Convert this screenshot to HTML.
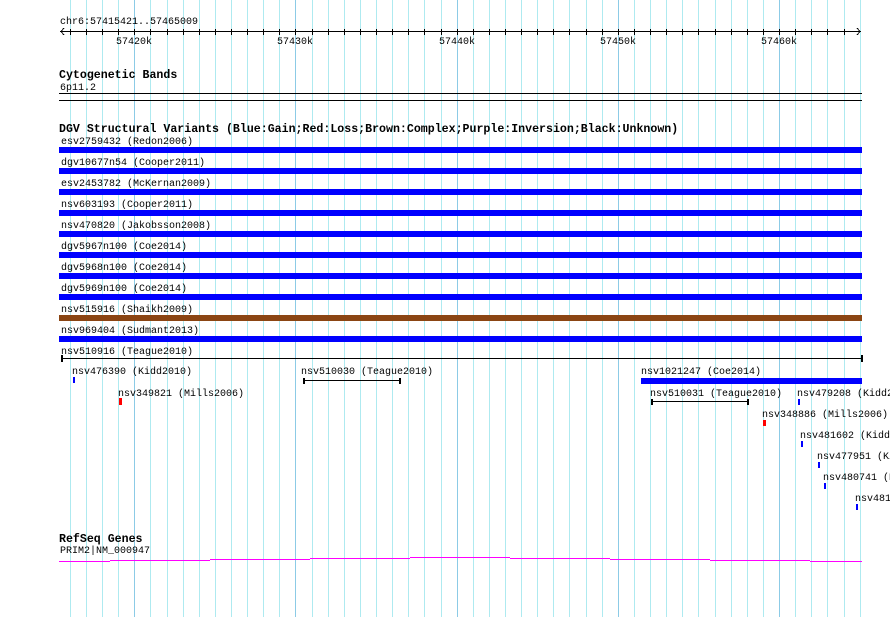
<!DOCTYPE html>
<html><head><meta charset="utf-8"><style>
html,body{margin:0;padding:0;background:#fff;}
svg{display:block;}
text{font-family:"Liberation Mono",monospace;font-size:10px;fill:#000;}
.b{font-weight:bold;font-size:11.6px;}
</style></head><body>
<svg width="890" height="617" viewBox="0 0 890 617" xmlns="http://www.w3.org/2000/svg">
<g shape-rendering="crispEdges">
<path stroke="#aeeaf0" stroke-width="1" fill="none" d="M70.5 0V617M86.5 0V617M102.5 0V617M118.5 0V617M150.5 0V617M167.5 0V617M183.5 0V617M199.5 0V617M215.5 0V617M231.5 0V617M247.5 0V617M263.5 0V617M279.5 0V617M312.5 0V617M328.5 0V617M344.5 0V617M360.5 0V617M376.5 0V617M392.5 0V617M408.5 0V617M424.5 0V617M441.5 0V617M473.5 0V617M489.5 0V617M505.5 0V617M521.5 0V617M537.5 0V617M553.5 0V617M569.5 0V617M586.5 0V617M602.5 0V617M634.5 0V617M650.5 0V617M666.5 0V617M682.5 0V617M698.5 0V617M715.5 0V617M731.5 0V617M747.5 0V617M763.5 0V617M795.5 0V617M811.5 0V617M827.5 0V617M844.5 0V617M860.5 0V617"/>
<path stroke="#8ccbe6" stroke-width="1" fill="none" d="M134.5 0V617M295.5 0V617M457.5 0V617M618.5 0V617M779.5 0V617"/>

<!-- ruler -->
<text x="60" y="24">chr6:57415421..57465009</text>
<line x1="60" y1="31.5" x2="861" y2="31.5" stroke="#000"/>
<polyline points="64,28 61,31.5 64,35" fill="none" stroke="#000"/>
<polyline points="857,28 860,31.5 857,35" fill="none" stroke="#000"/>
<path stroke="#000" stroke-width="1" fill="none" d="M70.5 29V35M86.5 29V35M102.5 29V35M118.5 29V35M134.5 29V35M150.5 29V35M167.5 29V35M183.5 29V35M199.5 29V35M215.5 29V35M231.5 29V35M247.5 29V35M263.5 29V35M279.5 29V35M295.5 29V35M312.5 29V35M328.5 29V35M344.5 29V35M360.5 29V35M376.5 29V35M392.5 29V35M408.5 29V35M424.5 29V35M441.5 29V35M457.5 29V35M473.5 29V35M489.5 29V35M505.5 29V35M521.5 29V35M537.5 29V35M553.5 29V35M569.5 29V35M586.5 29V35M602.5 29V35M618.5 29V35M634.5 29V35M650.5 29V35M666.5 29V35M682.5 29V35M698.5 29V35M715.5 29V35M731.5 29V35M747.5 29V35M763.5 29V35M779.5 29V35M795.5 29V35M811.5 29V35M827.5 29V35M844.5 29V35"/>
<text x="134" y="44" text-anchor="middle">57420k</text>
<text x="295" y="44" text-anchor="middle">57430k</text>
<text x="457" y="44" text-anchor="middle">57440k</text>
<text x="618" y="44" text-anchor="middle">57450k</text>
<text x="779" y="44" text-anchor="middle">57460k</text>

<text class="b" x="59" y="78">Cytogenetic Bands</text>
<text x="60" y="90">6p11.2</text>
<rect x="59" y="93" width="803" height="1" fill="#000"/>
<rect x="59" y="100" width="803" height="1" fill="#000"/>

<text class="b" x="59" y="132">DGV Structural Variants (Blue:Gain;Red:Loss;Brown:Complex;Purple:Inversion;Black:Unknown)</text>
<text x="61" y="144">esv2759432 (Redon2006)</text>
<rect x="59" y="147" width="803" height="6" fill="#0000ff"/>
<text x="61" y="165">dgv10677n54 (Cooper2011)</text>
<rect x="59" y="168" width="803" height="6" fill="#0000ff"/>
<text x="61" y="186">esv2453782 (McKernan2009)</text>
<rect x="59" y="189" width="803" height="6" fill="#0000ff"/>
<text x="61" y="207">nsv603193 (Cooper2011)</text>
<rect x="59" y="210" width="803" height="6" fill="#0000ff"/>
<text x="61" y="228">nsv470820 (Jakobsson2008)</text>
<rect x="59" y="231" width="803" height="6" fill="#0000ff"/>
<text x="61" y="249">dgv5967n100 (Coe2014)</text>
<rect x="59" y="252" width="803" height="6" fill="#0000ff"/>
<text x="61" y="270">dgv5968n100 (Coe2014)</text>
<rect x="59" y="273" width="803" height="6" fill="#0000ff"/>
<text x="61" y="291">dgv5969n100 (Coe2014)</text>
<rect x="59" y="294" width="803" height="6" fill="#0000ff"/>
<text x="61" y="312">nsv515916 (Shaikh2009)</text>
<rect x="59" y="315" width="803" height="6" fill="#8b4513"/>
<text x="61" y="333">nsv969404 (Sudmant2013)</text>
<rect x="59" y="336" width="803" height="6" fill="#0000ff"/>
<text x="61" y="354">nsv510916 (Teague2010)</text>
<rect x="61" y="358" width="801" height="1" fill="#000"/>
<rect x="61" y="355" width="2" height="7" fill="#000"/>
<rect x="861" y="355" width="2" height="7" fill="#000"/>

<text x="72" y="374">nsv476390 (Kidd2010)</text>
<rect x="73" y="377" width="2" height="6" fill="#0000ff"/>
<text x="301" y="374">nsv510030 (Teague2010)</text>
<rect x="303" y="380" width="97" height="1" fill="#000"/>
<rect x="303" y="378" width="2" height="6" fill="#000"/>
<rect x="399" y="378" width="2" height="6" fill="#000"/>
<text x="641" y="374">nsv1021247 (Coe2014)</text>
<rect x="641" y="378" width="221" height="6" fill="#0000ff"/>

<text x="118" y="396">nsv349821 (Mills2006)</text>
<rect x="119" y="398" width="3" height="7" fill="#ff0000"/>
<text x="650" y="396">nsv510031 (Teague2010)</text>
<rect x="651" y="401" width="97" height="1" fill="#000"/>
<rect x="651" y="399" width="2" height="6" fill="#000"/>
<rect x="747" y="399" width="2" height="6" fill="#000"/>
<text x="797" y="396">nsv479208 (Kidd2010)</text>
<rect x="798" y="399" width="2" height="6" fill="#0000ff"/>

<text x="762" y="417">nsv348886 (Mills2006)</text>
<rect x="763" y="420" width="3" height="6" fill="#ff0000"/>
<text x="800" y="438">nsv481602 (Kidd2010)</text>
<rect x="801" y="441" width="2" height="6" fill="#0000ff"/>
<text x="817" y="459">nsv477951 (Kidd2010)</text>
<rect x="818" y="462" width="2" height="6" fill="#0000ff"/>
<text x="823" y="480">nsv480741 (Kidd2010)</text>
<rect x="824" y="483" width="2" height="6" fill="#0000ff"/>
<text x="855" y="501">nsv481</text>
<rect x="856" y="504" width="2" height="6" fill="#0000ff"/>

<text class="b" x="59" y="542">RefSeq Genes</text>
<text x="60" y="553">PRIM2|NM_000947</text>
<g fill="#ff00ff">
<rect x="59" y="561" width="51" height="1"/>
<rect x="110" y="560" width="100" height="1"/>
<rect x="210" y="559" width="100" height="1"/>
<rect x="310" y="558" width="100" height="1"/>
<rect x="410" y="557" width="100" height="1"/>
<rect x="510" y="558" width="100" height="1"/>
<rect x="610" y="559" width="100" height="1"/>
<rect x="710" y="560" width="100" height="1"/>
<rect x="810" y="561" width="52" height="1"/>
</g>
</g>
</svg>
</body></html>
